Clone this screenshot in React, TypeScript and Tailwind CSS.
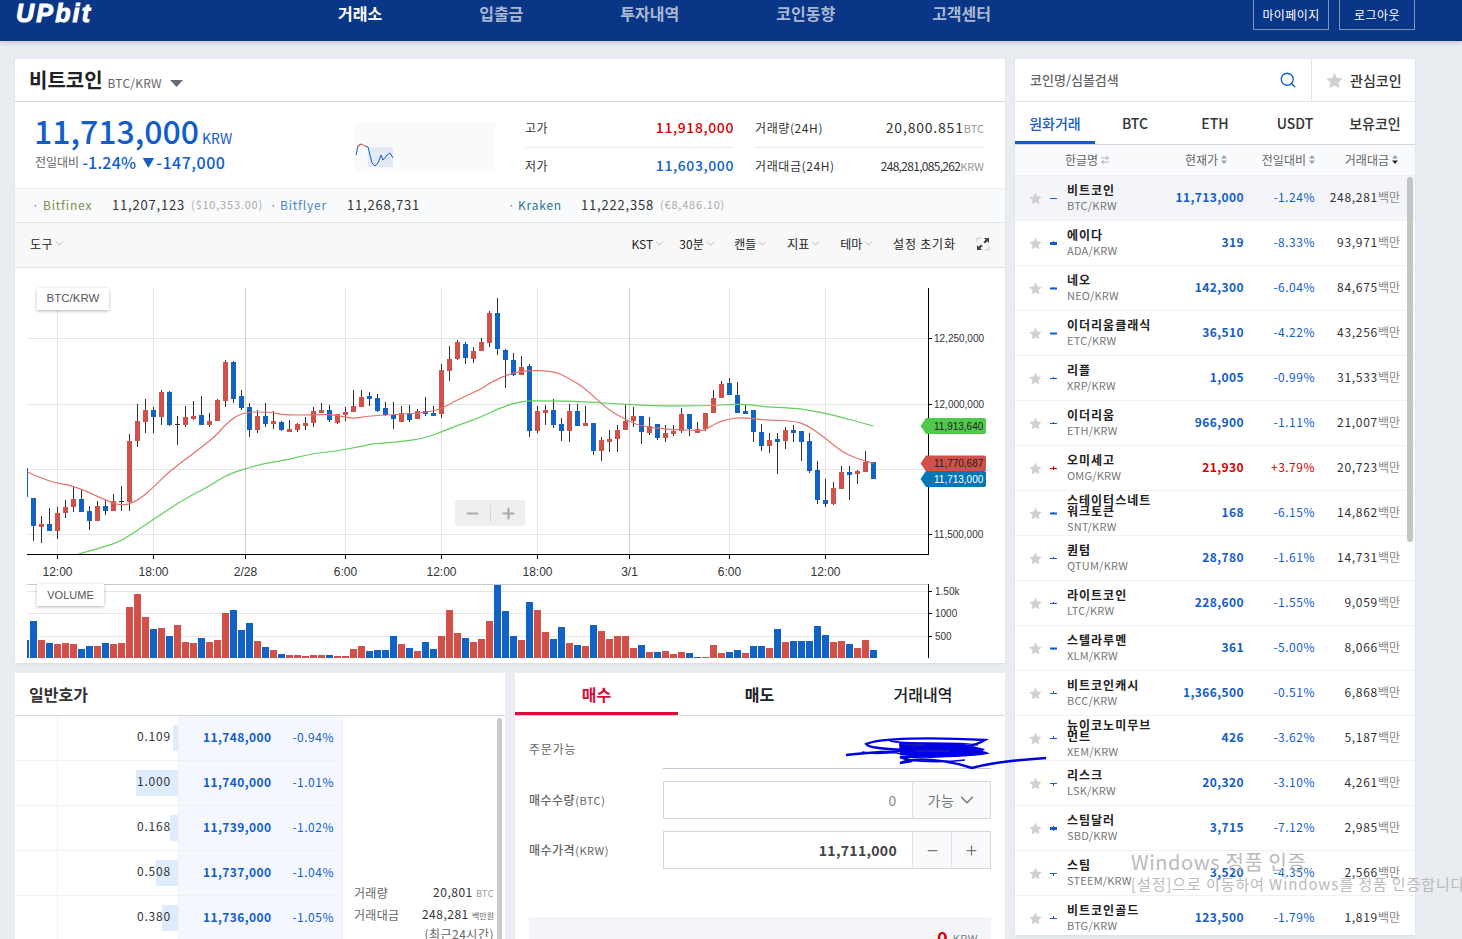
import { ChevronDown, Minus, Plus, Search, ArrowRightLeft } from "lucide-react";

// candles are read off the chart: [red?, wickTop, bodyTop, bodyBottom, wickBottom], y = 280 + v / 3
const candles: number[][] = [
  [0,655,655,737,782],[1,708,732,740,788],[0,684,732,752,752],[1,682,700,752,776],[1,660,682,698,713],[1,618,658,680,695],[0,628,658,695,695],[0,678,694,722,749],[1,663,678,722,722],[0,660,678,692,704],
  [1,642,664,692,692],[2,618,663,665,692],[1,462,484,665,692],[1,372,424,482,500],[1,357,390,425,458],[0,380,390,410,458],[1,330,336,410,434],[0,334,336,434,437],[2,408,432,434,494],[1,378,412,434,440],
  [1,363,408,416,419],[0,348,406,434,434],[1,400,423,434,440],[1,358,360,422,422],[1,241,246,362,380],[0,244,246,358,368],[0,330,349,383,390],[0,370,382,449,470],[1,390,408,449,458],[0,370,408,431,440],
  [1,394,423,431,446],[0,423,426,449,452],[1,420,447,455,455],[1,430,432,449,455],[1,411,429,437,449],[1,382,394,428,440],[1,370,390,398,398],[0,376,390,419,425],[1,402,402,428,431],[1,382,396,404,422],
  [1,330,378,395,395],[1,330,351,380,380],[0,336,348,357,378],[0,343,354,392,396],[0,366,384,406,408],[0,366,404,416,446],[1,378,400,425,425],[0,376,400,419,425],[1,388,393,416,416],[0,351,394,401,407],
  [0,378,399,407,407],[1,252,270,403,413],[1,198,237,272,302],[1,180,186,236,240],[0,186,192,233,251],[1,201,213,236,248],[1,174,186,212,212],[1,94,99,188,200],[0,55,99,208,224],[0,208,210,239,323],
  [0,220,240,285,288],[1,228,261,284,284],[0,252,258,452,470],[1,378,393,452,458],[1,376,390,398,434],[0,357,390,434,443],[0,414,432,452,482],[1,372,393,452,485],[0,372,393,437,437],[1,378,429,437,437],
  [0,429,429,512,524],[1,471,480,512,542],[1,450,477,485,515],[1,435,450,476,515],[1,375,423,449,449],[1,381,408,422,440],[0,408,408,455,491],[1,411,438,458,464],[0,432,432,473,479],[1,435,459,473,485],
  [1,435,452,461,467],[1,384,402,452,458],[0,402,402,446,467],[1,426,447,458,458],[1,399,399,446,452],[1,330,354,398,398],[1,303,312,353,353],[0,294,309,344,344],[0,306,345,398,398],[0,375,393,401,401],
  [0,390,390,455,485],[0,432,456,497,512],[1,459,480,497,518],[0,459,477,485,581],[1,441,450,482,506],[0,435,450,458,485],[0,453,453,485,542],[0,459,483,572,578],[0,543,570,659,671],[0,597,660,671,680],
  [1,605,624,671,674],[1,558,576,626,626],[0,558,576,584,659],[1,570,573,581,611],[1,513,546,575,575],[0,546,546,596,596],
];

// [red?, top], y = 555 + top / 3
const volumes: number[][] = [
  [0,198],[1,255],[0,264],[1,267],[1,264],[1,267],[0,282],[0,273],[1,273],[0,264],[1,267],[1,264],[1,156],[1,117],[1,186],[0,222],[1,219],[0,243],[1,210],[1,261],
  [1,264],[0,249],[1,261],[1,255],[1,174],[0,165],[0,225],[0,204],[1,258],[0,276],[1,285],[0,297],[1,300],[1,300],[1,303],[1,300],[1,300],[0,300],[1,303],[1,303],
  [1,282],[1,273],[0,288],[0,285],[0,285],[0,243],[1,267],[0,279],[1,288],[0,261],[0,282],[1,243],[1,165],[1,234],[0,249],[1,261],[1,252],[1,198],[0,90],[0,168],
  [0,243],[1,255],[0,141],[1,165],[1,231],[0,252],[0,216],[1,264],[0,270],[1,273],[0,210],[1,228],[1,252],[1,243],[1,243],[1,279],[0,270],[1,291],[0,291],[1,288],
  [1,297],[1,291],[0,294],[0,306],[1,306],[1,270],[1,294],[0,291],[0,285],[1,294],[0,273],[0,273],[1,279],[0,222],[1,261],[0,258],[0,258],[0,258],[0,213],[0,240],
  [1,261],[1,258],[0,267],[1,279],[1,255],[0,285],
];

const redLine = [[37,576],[105,607],[175,616],[270,660],[318,678],[365,665],[415,622],[460,577],[555,505],[605,465],[630,435],[680,395],[775,397],[800,405],[890,405],[960,403],[1010,417],[1065,407],[1155,403],[1265,395],[1325,360],[1400,327],[1425,308],[1505,272],[1615,272],[1665,296],[1710,325],[1780,390],[1835,420],[1875,438],[1955,448],[2055,452],[2071,450],[2105,428],[2145,416],[2185,412],[2255,421],[2335,422],[2375,435],[2425,470],[2485,518],[2525,535],[2575,550]];
const greenLine = [[190,822],[260,803],[320,783],[415,718],[510,656],[585,618],[630,587],[690,566],[750,550],[800,543],[890,521],[960,514],[1050,497],[1075,491],[1155,486],[1225,475],[1275,458],[1325,437],[1395,413],[1445,388],[1515,363],[1595,362],[1705,365],[1835,373],[1915,378],[2085,377],[2145,373],[2195,373],[2255,381],[2355,385],[2455,405],[2575,438]];

const RED = "#d2504a";
const BLUE = "#1261c4";
const vLines = [[57.5,"#e6e6e6"],[153.5,"#e6e6e6"],[245.5,"#cccccc"],[345.5,"#e6e6e6"],[441.5,"#e6e6e6"],[537.5,"#e6e6e6"],[629.5,"#cccccc"],[729.5,"#e6e6e6"],[825.5,"#e6e6e6"]] as [number,string][];
const xLabels = ["12:00","18:00","2/28","6:00","12:00","18:00","3/1","6:00","12:00"];

function smooth(points: number[][]) {
  const p = points.map(([x, y]) => [15 + x / 3, 280 + y / 3]);
  let d = `M${p[0][0]} ${p[0][1]}`;
  for (let i = 1; i < p.length - 1; i++) {
    const mx = (p[i][0] + p[i + 1][0]) / 2;
    const my = (p[i][1] + p[i + 1][1]) / 2;
    d += ` Q${p[i][0]} ${p[i][1]} ${mx} ${my}`;
  }
  const l = p[p.length - 1];
  return d + ` L${l[0]} ${l[1]}`;
}

function PriceTag({ y, color, text, light }: { y: number; color: string; text: string; light?: boolean }) {
  return (
    <g>
      <path d={`M920.5 ${y} L926 ${y - 8} H984 Q986 ${y - 8} 986 ${y - 6} V${y + 6} Q986 ${y + 8} 984 ${y + 8} H926 Z`} fill={color} />
      <text x="934" y={y + 3.5} fontSize="10" fill={light ? "#ffffff" : "#222222"} fontFamily="Liberation Sans, sans-serif">{text}</text>
    </g>
  );
}

function Chart() {
  return (
    <div className="relative h-[395px] bg-white">
      <svg width="990" height="395" viewBox="15 268 990 395" className="block">
        {[338.5,404.5,469.5,534.5].map((y) => <line key={y} x1="27" x2="928" y1={y} y2={y} stroke="#e6e6e6" />)}
        {vLines.map(([x, c]) => <line key={x} x1={x} x2={x} y1="288" y2="555" stroke={c} />)}
        <rect x="27" y="468" width="1" height="29" fill={BLUE} />
        {candles.map((c, i) => (
          <g key={i} shapeRendering="crispEdges">
            <line x1={33.5 + 8 * i} x2={33.5 + 8 * i} y1={280 + c[1] / 3} y2={280 + c[4] / 3} stroke="#2f2f2f" />
            <rect x={31 + 8 * i} y={280 + c[2] / 3} width="5" height={Math.max(1, (c[3] - c[2]) / 3)} fill={c[0] === 1 ? RED : c[0] === 0 ? BLUE : "#2f2f2f"} />
          </g>
        ))}
        <path d={smooth(redLine)} fill="none" stroke="#e2736c" strokeWidth="1.2" />
        <path d={smooth(greenLine)} fill="none" stroke="#62cf5e" strokeWidth="1.2" />

        <line x1="27" x2="929" y1="554.5" y2="554.5" stroke="#000000" />
        <line x1="928.5" x2="928.5" y1="288" y2="555" stroke="#000000" />
        {vLines.map(([x], i) => (
          <g key={x}>
            <line x1={x} x2={x} y1="555" y2="559" stroke="#000000" />
            <text x={x} y="576" textAnchor="middle" fontSize="12" fill="#333333" fontFamily="Liberation Sans, sans-serif">{xLabels[i]}</text>
          </g>
        ))}
        {[[338.5,"12,250,000"],[404.5,"12,000,000"],[534.5,"11,500,000"]].map(([y, t]) => (
          <g key={t as string}>
            <line x1="929" x2="932" y1={y as number} y2={y as number} stroke="#000000" />
            <text x="934" y={(y as number) + 3.5} fontSize="10" fill="#333333" fontFamily="Liberation Sans, sans-serif">{t}</text>
          </g>
        ))}
        <PriceTag y={426} color="#51c94c" text="11,913,640" />
        <PriceTag y={463.5} color={RED} text="11,770,687" />
        <PriceTag y={479} color="#0277b6" text="11,713,000" light />

        <line x1="27" x2="929" y1="584.5" y2="584.5" stroke="#c8c8c8" />
        {[591.5,613.5,636.5].map((y) => <line key={y} x1="27" x2="928" y1={y} y2={y} stroke="#e6e6e6" />)}
        <rect x="27" y="640" width="2" height="18" fill={BLUE} />
        {volumes.map((v, i) => (
          <rect key={i} x={30 + 8 * i} y={555 + v[1] / 3} width="7" height={103 - v[1] / 3} fill={v[0] ? RED : BLUE} shapeRendering="crispEdges" />
        ))}
        <line x1="928.5" x2="928.5" y1="584" y2="658" stroke="#000000" />
        {[[591.5,"1.50k"],[613.5,"1000"],[636.5,"500"]].map(([y, t]) => (
          <g key={t as string}>
            <line x1="929" x2="932" y1={y as number} y2={y as number} stroke="#000000" />
            <text x="935" y={(y as number) + 3.5} fontSize="10" fill="#333333" fontFamily="Liberation Sans, sans-serif">{t}</text>
          </g>
        ))}
      </svg>
      <div className="absolute top-[20px] left-[22px] flex h-[22px] w-[72px] items-center justify-center bg-white text-[11.5px] text-[#555] shadow-[0_1px_3px_rgba(0,0,0,0.3)] [font-family:'Liberation_Sans',sans-serif]">BTC/KRW</div>
      <div className="absolute top-[316px] left-[22px] flex h-[22px] w-[67px] items-center justify-center bg-white text-[11px] text-[#555] shadow-[0_1px_3px_rgba(0,0,0,0.3)] [font-family:'Liberation_Sans',sans-serif]">VOLUME</div>
      <div className="absolute top-[232px] left-[440px] flex h-[26px] w-[70px] items-center rounded-[3px] bg-[#efefef] text-[#aaaaaa]">
        <div className="flex w-[35px] justify-center"><Minus size={17} strokeWidth={3} /></div>
        <div className="h-[17px] w-px bg-[#d8d8d8]" />
        <div className="flex w-[34px] justify-center"><Plus size={17} strokeWidth={3} /></div>
      </div>
    </div>
  );
}

function Star({ size = 13 }: { size?: number }) {
  return (
    <svg width={size} height={size} viewBox="0 0 24 24" className="shrink-0">
      <polygon points="12,1 15.4,8.3 23.5,9.3 17.6,14.8 19.1,22.8 12,18.9 4.9,22.8 6.4,14.8 0.5,9.3 8.6,8.3" fill="#d0d0d0" />
    </svg>
  );
}

function Sort({ dark }: { dark?: boolean }) {
  return (
    <svg width="6" height="9" viewBox="0 0 6 9" className="ml-[3px] shrink-0">
      <polygon points="3,0 6,3.5 0,3.5" fill="#9a9fb0" />
      <polygon points="0,5.5 6,5.5 3,9" fill={dark ? "#222222" : "#9a9fb0"} />
    </svg>
  );
}

function Mini({ color, body = 1, up = 0, down = 0 }: { color: string; body?: number; up?: number; down?: number }) {
  return (
    <svg width="7" height="11" viewBox="0 0 7 11" className="shrink-0">
      <rect x="3" y={5 - up} width="1" height={up + down + 1} fill={color} />
      <rect x="0" y={5.5 - body / 2} width="7" height={body} fill={color} />
    </svg>
  );
}

type Coin = { name: string; sym: string; price: string; pct: string; vol: string; body?: number; up?: number; down?: number };

const coins: Coin[] = [
  { name: "비트코인", sym: "BTC/KRW", price: "11,713,000", pct: "-1.24%", vol: "248,281" },
  { name: "에이다", sym: "ADA/KRW", price: "319", pct: "-8.33%", vol: "93,971", body: 3, up: 2 },
  { name: "네오", sym: "NEO/KRW", price: "142,300", pct: "-6.04%", vol: "84,675", body: 2, up: 1 },
  { name: "이더리움클래식", sym: "ETC/KRW", price: "36,510", pct: "-4.22%", vol: "43,256", body: 2 },
  { name: "리플", sym: "XRP/KRW", price: "1,005", pct: "-0.99%", vol: "31,533", up: 1 },
  { name: "이더리움", sym: "ETH/KRW", price: "966,900", pct: "-1.11%", vol: "21,007", up: 1 },
  { name: "오미세고", sym: "OMG/KRW", price: "21,930", pct: "+3.79%", vol: "20,723", up: 2, down: 1 },
  { name: "스테이터스네트워크토큰", sym: "SNT/KRW", price: "168", pct: "-6.15%", vol: "14,862", body: 2, up: 1 },
  { name: "퀀텀", sym: "QTUM/KRW", price: "28,780", pct: "-1.61%", vol: "14,731", up: 1 },
  { name: "라이트코인", sym: "LTC/KRW", price: "228,600", pct: "-1.55%", vol: "9,059", up: 1 },
  { name: "스텔라루멘", sym: "XLM/KRW", price: "361", pct: "-5.00%", vol: "8,066", body: 2, down: 1 },
  { name: "비트코인캐시", sym: "BCC/KRW", price: "1,366,500", pct: "-0.51%", vol: "6,868", up: 2 },
  { name: "뉴이코노미무브먼트", sym: "XEM/KRW", price: "426", pct: "-3.62%", vol: "5,187", up: 2 },
  { name: "리스크", sym: "LSK/KRW", price: "20,320", pct: "-3.10%", vol: "4,261", down: 2 },
  { name: "스팀달러", sym: "SBD/KRW", price: "3,715", pct: "-7.12%", vol: "2,985", body: 3, up: 2, down: 2 },
  { name: "스팀", sym: "STEEM/KRW", price: "3,520", pct: "-4.35%", vol: "2,566", down: 2 },
  { name: "비트코인골드", sym: "BTG/KRW", price: "123,500", pct: "-1.79%", vol: "1,819", up: 2 },
];

const asks = [
  { qty: "0.109", bar: 5, price: "11,748,000", pct: "-0.94%" },
  { qty: "1.000", bar: 42, price: "11,740,000", pct: "-1.01%" },
  { qty: "0.168", bar: 8, price: "11,739,000", pct: "-1.02%" },
  { qty: "0.508", bar: 22, price: "11,737,000", pct: "-1.04%" },
  { qty: "0.380", bar: 16, price: "11,736,000", pct: "-1.05%" },
];

function CoinRow({ coin, active }: { coin: Coin; active: boolean }) {
  const up = coin.pct.startsWith("+");
  const color = up ? "text-[#d60000]" : "text-[#115dcb]";
  return (
    <div className={`flex h-[45px] shrink-0 items-center border-b border-[#f1f1f4] ${active ? "bg-[#f4f5f8]" : "bg-white"}`}>
      <div className="flex w-[35px] justify-end pr-[8px]"><Star /></div>
      <Mini color={up ? "#d60000" : "#115dcb"} body={coin.body} up={coin.up} down={coin.down} />
      <div className="ml-[10px] w-[90px]">
        <div className="mb-[3px] text-[12px] leading-[11px] font-bold tracking-[1px] text-[#222]">{coin.name}</div>
        <div className="text-[11px] leading-[14px] tracking-[0.2px] whitespace-nowrap text-[#777]">{coin.sym}</div>
      </div>
      <div className={`w-[87px] pb-[2px] text-right text-[12px] font-bold tracking-[0.4px] ${color}`}>{coin.price}</div>
      <div className={`w-[71px] pb-[2px] text-right text-[12px] tracking-[0.5px] ${color}`}>{coin.pct}</div>
      <div className="w-[85px] pb-[2px] text-right text-[12px] tracking-[0.7px] text-[#333]">
        {coin.vol}<span className="text-[12px] tracking-normal text-[#888]">백만</span>
      </div>
    </div>
  );
}

function Toolbar() {
  const items = [["KST","w-[48px]"],["30분","w-[55px]"],["캔들","w-[53px]"],["지표","w-[53px]"],["테마","w-[53px]"]];
  return (
    <div className="flex h-[46px] items-center border-y border-[#e3e4e8] bg-[#f8f8f8] px-[15px] pb-[3px] text-[12px] text-[#222]">
      <span className="flex w-[602px] items-center tracking-[0.5px]">도구<ChevronDown size={13} strokeWidth={1.2} className="text-[#999]" /></span>
      {items.map(([t, w]) => (
        <span key={t} className={`flex items-center ${w}`}>{t}<ChevronDown size={13} strokeWidth={1.2} className="text-[#999]" /></span>
      ))}
      <span className="w-[83px] tracking-[0.8px]">설정 초기화</span>
      <svg width="14" height="14" viewBox="0 0 14 14">
        <path d="M1 5V1H5M9 13H13V9" fill="none" stroke="#c8c8c8" />
        <path d="M8 1H13V6L11.3 4.3L9 6.6L7.4 5L9.7 2.7Z" fill="#444444" />
        <path d="M6 13H1V8L2.7 9.7L5 7.4L6.6 9L4.3 11.3Z" fill="#444444" />
      </svg>
    </div>
  );
}

export default function App() {
  return (
    <div className="relative h-[939px] w-[1462px] overflow-hidden bg-[#e9ecf1] [font-family:'Noto_Sans_CJK_KR','Noto_Sans',sans-serif]">
      <header className="flex h-[41px] items-start bg-[#093687] shadow-[0_2px_4px_rgba(0,0,0,0.15)]">
        <div className="ml-[16px] w-[322px] pt-[1px] text-[25px] leading-[24px] font-bold tracking-[2.2px] text-white italic [-webkit-text-stroke:1px_white] [font-family:'Liberation_Sans',sans-serif]">UPbit</div>
        <nav className="flex gap-[97px] pt-[1px] text-[16px] leading-[24px] font-bold text-[#a9b8d4]">
          <span className="text-white">거래소</span>
          <span>입출금</span>
          <span>투자내역</span>
          <span>코인동향</span>
          <span>고객센터</span>
        </nav>
        <div className="ml-auto flex gap-[10px] pr-[47px]">
          <div className="flex h-[30px] w-[76px] items-center justify-center border border-t-0 border-[#7f94bd] text-[12px] tracking-[0.4px] text-white">마이페이지</div>
          <div className="flex h-[30px] w-[76px] items-center justify-center border border-t-0 border-[#7f94bd] text-[12px] tracking-[0.4px] text-white">로그아웃</div>
        </div>
      </header>

      <main className="flex gap-[10px] pt-[18px] pl-[15px]">
        <div className="flex w-[990px] flex-col gap-[10px]">
          <section className="bg-white shadow-[0_1px_2px_rgba(0,0,0,0.08)]">
            <div className="flex h-[43px] items-center border-b border-[#d4d6dc] pl-[14px]">
              <span className="text-[20px] font-bold text-[#222]">비트코인</span>
              <span className="mt-[6px] ml-[5px] text-[12px] tracking-[0.2px] text-[#666]">BTC/KRW</span>
              <svg width="13" height="7" viewBox="0 0 13 7" className="mt-[6px] ml-[8px]"><polygon points="0,0 13,0 6.5,7" fill="#666a75" /></svg>
            </div>

            <div className="flex h-[87px] border-b border-[#eef0f3]">
              <div className="w-[340px] pt-[6px] pl-[19px]">
                <div className="flex items-end leading-[45px] text-[#115dcb]">
                  <span className="text-[32px] font-medium">11,713,000</span>
                  <span className="mb-[5px] ml-[3px] text-[14px] leading-[20px]">KRW</span>
                </div>
                <div className="-mt-[1px] ml-[1px] flex items-center leading-[20px]">
                  <span className="mr-[3px] text-[12px] text-[#666]">전일대비</span>
                  <span className="text-[16px] font-medium tracking-[0.2px] text-[#115dcb]">-1.24%</span>
                  <span className="mr-[2px] ml-[6px] text-[12px] text-[#115dcb]">▼</span>
                  <span className="text-[16px] font-medium tracking-[0.5px] text-[#115dcb]">-147,000</span>
                </div>
              </div>
              <div className="mt-[20px] h-[50px] w-[140px] bg-[#f9fafc]">
                <svg width="140" height="50" viewBox="355 122 140 50" className="block">
                  <rect x="368" y="147" width="25" height="20" fill="#e3eaf6" />
                  <path d="M356 155L358 146L361 144" fill="none" stroke="#1261c4" />
                  <path d="M358 146L361 144L365 146" fill="none" stroke="#d2504a" />
                  <path d="M365 146L368 147L372 163L375 166L378 163L381 155L383 160L387 155L390 153L393 158" fill="none" stroke="#1261c4" />
                </svg>
              </div>
              <div className="ml-[30px] w-[209px] pt-[8px] text-[12px] text-[#333]">
                <div className="flex h-[38px] items-center justify-between border-b border-[#e9eaee] pb-[2px]">
                  <span className="tracking-[0.5px]">고가</span>
                  <span className="text-[14px] font-medium tracking-[0.6px] text-[#d60000]">11,918,000</span>
                </div>
                <div className="flex h-[35px] items-center justify-between">
                  <span className="tracking-[0.5px]">저가</span>
                  <span className="text-[14px] font-medium tracking-[0.6px] text-[#115dcb]">11,603,000</span>
                </div>
              </div>
              <div className="ml-[21px] w-[230px] pt-[8px] text-[12px] text-[#333]">
                <div className="flex h-[38px] items-center justify-between border-b border-[#e9eaee] pb-[2px]">
                  <span className="tracking-[0.6px]">거래량(24H)</span>
                  <span className="pr-[1px] text-[14px] tracking-[0.8px]">20,800.851<span className="text-[11px] tracking-normal text-[#999]">BTC</span></span>
                </div>
                <div className="flex h-[35px] items-center justify-between">
                  <span className="tracking-[0.6px]">거래대금(24H)</span>
                  <span className="pr-[1px] tracking-[-0.7px]">248,281,085,262<span className="text-[11px] tracking-normal text-[#999]">KRW</span></span>
                </div>
              </div>
            </div>

            <div className="flex h-[33px] items-center bg-[#f9fafc] pb-[2px] pl-[19px] text-[12px] tracking-[0.8px]">
              <span className="w-[9px] -translate-x-[2px] text-[#777]">·</span>
              <span className="w-[69px] text-[#7c8f4c]">Bitfinex</span>
              <span className="w-[79px] text-[13px] text-[#333]">11,207,123</span>
              <span className="w-[81px] text-[11px] text-[#aaa]">($10,353.00)</span>
              <span className="w-[8px] -translate-x-[2px] text-[#777]">·</span>
              <span className="w-[67px] text-[#4c86c6]">Bitflyer</span>
              <span className="w-[163px] text-[13px] text-[#333]">11,268,731</span>
              <span className="w-[8px] -translate-x-[2px] text-[#777]">·</span>
              <span className="w-[63px] text-[#2d7393]">Kraken</span>
              <span className="w-[79px] text-[13px] text-[#333]">11,222,358</span>
              <span className="text-[11px] text-[#aaa]">(€8,486.10)</span>
            </div>

            <Toolbar />
            <Chart />
          </section>

          <div className="flex h-[300px] gap-[10px]">
            <section className="relative w-[490px] bg-white">
              <div className="flex h-[43px] items-center border-b border-[#d4d6dc] pl-[14px] text-[16px] font-bold text-[#333]">일반호가</div>
              <div className="flex">
                <div className="w-[328px]">
                  {asks.map((a) => (
                    <div key={a.price} className="flex h-[45px] border-b border-[#f1f1f4]">
                      <div className="w-[43px] border-r border-[#f1f1f4]" />
                      <div className="relative flex w-[120px] items-center justify-end">
                        <div className="absolute top-[9px] right-0 h-[26px] bg-[#deecfd]" style={{ width: a.bar }} />
                        <span className="relative -mt-[4px] pr-[7px] text-[12px] tracking-[0.8px] text-[#333]">{a.qty}</span>
                      </div>
                      <div className="flex w-[165px] items-center justify-between border-x border-[#f1f1f4] bg-[#f4f8fe] pr-[8px] pb-[2px] pl-[24px] text-[#115dcb]">
                        <span className="text-[12px] font-bold tracking-[0.4px]">{a.price}</span>
                        <span className="text-[12px] tracking-[0.5px]">{a.pct}</span>
                      </div>
                    </div>
                  ))}
                </div>
                <div className="w-[151px] pt-[166px] pl-[11px] text-[12px] leading-[20px] text-[#666]">
                  <div className="flex items-center justify-between"><span className="tracking-[0.3px]">거래량</span><span className="tracking-[0.5px] text-[#333]">20,801 <span className="text-[9px] text-[#999]">BTC</span></span></div>
                  <div className="flex items-center justify-between"><span className="tracking-[0.3px]">거래대금</span><span className="tracking-[0.5px] text-[#333]">248,281 <span className="text-[8px] tracking-normal text-[#666]">백만원</span></span></div>
                  <div className="-mt-[2px] text-right tracking-[0.5px]">(최근24시간)</div>
                </div>
              </div>
              <div className="absolute top-[45px] left-[482px] h-[260px] w-[5px] rounded-[3px] bg-[#c9c9c9]" />
            </section>

            <section className="w-[490px] bg-white">
              <div className="flex h-[43px] border-b border-[#d4d6dc] text-[16px] font-bold text-[#222]">
                <div className="flex w-[163px] items-center justify-center border-b-[3px] border-[#d60f3a] pt-[3px] text-[#d60f3a]">매수</div>
                <div className="flex w-[163px] items-center justify-center">매도</div>
                <div className="flex w-[164px] items-center justify-center font-medium">거래내역</div>
              </div>
              <div className="px-[14px] text-[12px] text-[#666]">
                <div className="flex h-[53px] items-start">
                  <span className="w-[134px] pt-[24px] tracking-[0.8px]">주문가능</span>
                  <div className="h-[53px] flex-1 border-b border-[#c4c8d6]" />
                </div>
                <div className="mt-[12px] flex h-[38px] items-center">
                  <span className="w-[134px] font-medium tracking-[0.5px]">매수수량<span className="text-[11px] font-normal">(BTC)</span></span>
                  <div className="flex h-[38px] flex-1 border border-[#d5d6dc]">
                    <div className="flex flex-1 items-center justify-end pr-[15px] text-[14px] tracking-[0.8px] text-[#888]">0</div>
                    <div className="flex w-[78px] items-center justify-center gap-[2px] border-l border-[#e3e4e8] bg-[#f9fafc] pl-[3px] text-[14px] tracking-[0.5px] text-[#777]">
                      가능<ChevronDown size={22} strokeWidth={1.6} />
                    </div>
                  </div>
                </div>
                <div className="mt-[12px] flex h-[38px] items-center">
                  <span className="w-[134px] font-medium tracking-[0.5px]">매수가격<span className="text-[11px] font-normal">(KRW)</span></span>
                  <div className="flex h-[38px] flex-1 border border-[#d5d6dc]">
                    <div className="flex flex-1 items-center justify-end pr-[15px] text-[14px] font-bold tracking-[0.3px] text-[#444]">11,711,000</div>
                    <div className="flex w-[39px] items-center justify-center border-l border-[#e3e4e8] bg-[#f9fafc] text-[#777]"><Minus size={15} strokeWidth={2} /></div>
                    <div className="flex w-[39px] items-center justify-center border-l border-[#e3e4e8] bg-[#f9fafc] text-[#777]"><Plus size={15} strokeWidth={2} /></div>
                  </div>
                </div>
                <div className="mt-[48px] flex h-[40px] items-start justify-end bg-[#f4f5f8] pt-[8px] pr-[13px]">
                  <span className="text-[18px] leading-[24px] font-bold text-[#d60000]">0</span>
                  <span className="mt-[5px] ml-[5px] text-[11px] leading-[16px] tracking-[0.5px] text-[#777]">KRW</span>
                </div>
              </div>
            </section>
          </div>
        </div>

        <aside className="relative flex h-[876px] w-[400px] flex-col overflow-hidden bg-white shadow-[0_1px_2px_rgba(0,0,0,0.08)]">
          <div className="flex h-[43px] shrink-0 items-center border-b border-[#e3e4e8]">
            <span className="w-[264px] pl-[15px] text-[13px] font-medium text-[#666]">코인명/심볼검색</span>
            <Search size={18} strokeWidth={1.7} className="text-[#115dcb]" />
            <div className="ml-[14px] flex h-full flex-1 items-center border-l border-[#e3e4e8] pl-[14px]">
              <Star size={17} />
              <span className="ml-[7px] text-[14px] font-medium text-[#333]">관심코인</span>
            </div>
          </div>
          <div className="flex h-[43px] shrink-0 border-b border-[#d4d6dc] text-[14px] font-medium text-[#333]">
            <div className="flex w-[80px] items-center justify-center border-b-[3px] border-[#115dcb] pt-[3px] text-[#115dcb]">원화거래</div>
            <div className="flex w-[80px] items-center justify-center">BTC</div>
            <div className="flex w-[80px] items-center justify-center">ETH</div>
            <div className="flex w-[80px] items-center justify-center">USDT</div>
            <div className="flex w-[80px] items-center justify-center">보유코인</div>
          </div>
          <div className="flex h-[31px] shrink-0 items-center border-b border-[#eef0f3] bg-[#f9fafc] pb-[1px] text-[12px] text-[#666]">
            <div className="flex w-[95px] items-center justify-end"><span className="mr-[2px]">한글명</span><ArrowRightLeft size={10} strokeWidth={2} className="text-[#9a9fb0]" /></div>
            <div className="flex w-[117px] items-center justify-end">현재가<Sort /></div>
            <div className="flex w-[88px] items-center justify-end">전일대비<Sort /></div>
            <div className="flex w-[83px] items-center justify-end">거래대금<Sort dark /></div>
          </div>
          {coins.map((c, i) => <CoinRow key={c.sym} coin={c} active={i === 0} />)}
          <div className="absolute top-[118px] left-[392px] h-[365px] w-[6px] rounded-[3px] bg-[#c4c4c4]" />
        </aside>
      </main>

      <svg width="212" height="42" viewBox="840 732 212 42" className="absolute top-[732px] left-[840px]">
        <path d="M846 755C870 752 890 752 905 750C885 749 868 748 866 744C880 738 930 737 985 740C975 746 960 749 940 750C960 752 980 750 986 753C965 757 925 756 900 757L912 761L900 763C915 757 945 759 972 768C990 763 1015 760 1046 758" fill="none" stroke="#0000e0" strokeWidth="2.4" />
        <path d="M862 752C880 756 895 750 900 754M890 741C910 745 950 741 978 745M905 760C925 762 950 762 965 760" fill="none" stroke="#0000e0" strokeWidth="1.6" />
        <path d="M899 743H960L985 749L978 755L930 758L900 755Z" fill="#0000e0" />
        <path d="M905 745H925M915 751H950" stroke="#2a2a90" strokeWidth="1" />
      </svg>

      <div className="pointer-events-none absolute top-[850px] left-[1131px] whitespace-nowrap text-[#b4b4b4]">
        <div className="text-[20px] leading-[24px] tracking-[0.6px] opacity-90">Windows 정품 인증</div>
        <div className="text-[15px] leading-[20px] tracking-[0.9px] opacity-90">[설정]으로 이동하여 Windows를 정품 인증합니다</div>
      </div>
    </div>
  );
}
